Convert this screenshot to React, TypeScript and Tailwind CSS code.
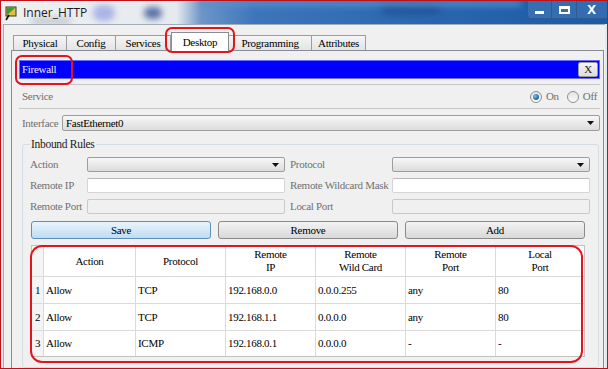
import React from 'react';

const tabs = [
  { name: 'Physical', w: 'w-[54px]' },
  { name: 'Config', w: 'w-[49px]' },
  { name: 'Services', w: 'w-[55px]' },
  { name: 'Desktop', w: 'w-[58px]', active: true },
  { name: 'Programming', w: 'w-[83px]' },
  { name: 'Attributes', w: 'w-[54px]' },
];

const rules = [
  ['1', 'Allow', 'TCP', '192.168.0.0', '0.0.0.255', 'any', '80'],
  ['2', 'Allow', 'TCP', '192.168.1.1', '0.0.0.0', 'any', '80'],
  ['3', 'Allow', 'ICMP', '192.168.0.1', '0.0.0.0', '-', '-'],
];

const headers = [
  ['Action'],
  ['Protocol'],
  ['Remote', 'IP'],
  ['Remote', 'Wild Card'],
  ['Remote', 'Port'],
  ['Local', 'Port'],
];

const colW = ['w-[92px]', 'w-[90px]', 'w-[90px]', 'w-[90px]', 'w-[90px]', 'w-[89px]'];

const Arrow = () => (
  <svg width="7" height="4" viewBox="0 0 7 4" className="shrink-0">
    <path d="M0 0h7L3.5 4z" fill="#111" />
  </svg>
);

const Combo: React.FC<{ text?: string; className?: string }> = ({ text, className }) => (
  <div
    className={`flex items-center justify-between rounded-[2px] border border-[#9d9d9d] bg-linear-to-b from-[#f7f7f7] to-[#dcdcdc] pl-[3px] pr-[5px] ${className ?? ''}`}
  >
    <span className="leading-none text-black">{text}</span>
    <Arrow />
  </div>
);

const TextBox: React.FC<{ disabled?: boolean }> = ({ disabled }) => (
  <div
    className={`h-[15px] w-[198px] rounded-[2px] border ${
      disabled ? 'border-[#c9c9c9] bg-[#f0f0f0]' : 'border-[#d5d5d5] border-t-[#b8b8b8] bg-white'
    }`}
  />
);

const Radio: React.FC<{ checked?: boolean }> = ({ checked }) => (
  <span className="flex h-[12px] w-[12px] items-center justify-center rounded-full border border-[#8f8f8f] bg-linear-to-b from-[#e4e4e4] to-[#fafafa]">
    {checked && (
      <span className="h-[6px] w-[6px] rounded-full bg-[radial-gradient(circle_at_35%_35%,#7fc0f0,#1f5fa8_70%)]" />
    )}
  </span>
);

const TitleIcon = () => (
  <svg width="13" height="15" viewBox="0 0 13 15">
    <rect x="1" y="1" width="10" height="9" fill="#d8c24a" stroke="#3b3b20" strokeWidth="1" />
    <path d="M2 2l8 0-8 7z" fill="#3f9a36" />
    <path d="M4 9l-3 5" stroke="#111" strokeWidth="1.6" />
  </svg>
);

export default function App() {
  return (
    <div className="relative flex h-[369px] w-[608px] flex-col overflow-hidden border border-[#c0101a] bg-[#f0f0f0] font-[Liberation_Serif,Times_New_Roman,serif] text-[11px] leading-[13px] tracking-[-0.3px]">
      {/* title bar */}
      <div className="relative h-[23px] shrink-0 overflow-hidden bg-[linear-gradient(90deg,#eef0f2_0%,#e6eaee_29%,#6e96c8_33%,#3d75ba_42%,#2e69b1_65%,#2260aa_85%,#1d5aa5_100%)] tracking-normal">
        <div className="absolute left-[92px] top-[4px] h-[16px] w-[22px] rounded-full bg-[#aab4e6] blur-[3px]" />
        <div className="absolute left-[143px] top-[6px] h-[12px] w-[18px] rounded-full bg-[#5c72a8] blur-[3px]" />
        <div className="absolute left-[30px] top-[16px] h-[8px] w-[40px] rounded-full bg-[#c9ccd0] blur-[3px]" />
        <div className="absolute left-[380px] top-[2px] h-[10px] w-[60px] rounded-full bg-[#1c4f92] blur-[4px]" />
        <div className="absolute left-[200px] top-0 h-[5px] w-[320px] bg-[#5a8fcc] blur-[3px]" />
        <div className="absolute left-[4px] top-[5px]">
          <TitleIcon />
        </div>
        <span className="absolute left-[22px] top-[4px] font-[Open_Sans,Liberation_Sans,sans-serif] text-[12px] leading-[15px] text-[#1b1b1b]">
          Inner_HTTP
        </span>
        <div className="absolute right-[-6px] top-0 flex h-[18px]">
          <div className="flex w-[25px] items-end justify-center rounded-bl-[4px] border border-t-0 border-[#2d5b94] bg-[#ffffff]/10 pb-[4px]">
            <span className="h-[3px] w-[9px] bg-white" />
          </div>
          <div className="flex w-[25px] items-center justify-center border border-l-0 border-t-0 border-[#2d5b94] bg-[#ffffff]/10">
            <span className="h-[8px] w-[11px] border-[2px] border-t-[3px] border-white" />
          </div>
          <div className="flex w-[36px] items-center justify-center rounded-br-[4px] border border-l-0 border-t-0 border-[#2d5b94] bg-[#ffffff]/10 pr-[6px] font-sans text-[13px] font-bold text-white">
            X
          </div>
        </div>
      </div>

      {/* window body */}
      <div className="flex min-h-0 flex-1">
        <div className="w-[3px] shrink-0 border-r border-[#a4adb7] bg-[#e3e8ee]" />
        <div className="flex min-w-0 flex-1 flex-col border-t border-[#a4adb7] bg-[#f0f0f0] pl-[7px] pr-[1px] pt-[7px]">
          {/* tabs */}
          <div className="flex h-[18px] items-end pl-[2px]">
            {tabs.map((t) =>
              t.active ? (
                <div
                  key={t.name}
                  className={`${t.w} relative z-10 -mb-px flex h-[19px] items-center justify-center border border-b-0 border-[#898c95] bg-white text-black`}
                >
                  {t.name}
                </div>
              ) : (
                <div
                  key={t.name}
                  className={`${t.w} flex h-[15px] items-center justify-center border border-b-0 border-l-0 border-[#9a9ca3] bg-linear-to-b from-[#f5f5f5] to-[#e4e4e4] text-black first:border-l`}
                >
                  {t.name}
                </div>
              )
            )}
          </div>

          {/* tab panel */}
          <div className="flex flex-1 flex-col border border-b-0 border-[#898c95] bg-[#f0f0f0] pl-[7px] pr-[3px] pt-[9px]">
            {/* firewall header */}
            <div className="flex h-[19px] items-center justify-between border border-[#6b6bff] bg-[#0000ff] pl-[2px] pr-[1px]">
              <span className="text-[#ececff]">Firewall</span>
              <span className="flex h-[15px] w-[20px] items-center justify-center rounded-[2px] border border-[#9a9a9a] bg-linear-to-b from-[#f4f4f4] to-[#dedede] text-[#222]">
                X
              </span>
            </div>
            <div className="h-[6px] border-b border-[#c6c6c6]" />

            {/* service */}
            <div className="flex h-[24px] items-center justify-between border-b border-[#c6c6c6] pl-[3px] pr-[3px] text-[#707070]">
              <span>Service</span>
              <div className="flex items-center">
                <Radio checked />
                <span className="ml-[4px] mr-[8px]">On</span>
                <Radio />
                <span className="ml-[4px]">Off</span>
              </div>
            </div>

            {/* interface */}
            <div className="mt-[6px] flex items-center pl-[3px]">
              <span className="w-[40px] text-[#707070]">Interface</span>
              <Combo text="FastEthernet0" className="h-[16px] flex-1" />
            </div>

            {/* inbound rules */}
            <fieldset className="ml-[3px] mr-[1px] mt-[6px] flex-1 rounded-[3px] border border-[#d3dce3] pl-[7px] pt-[6px]">
              <legend className="px-[1px] text-[11.5px] leading-[14px] text-[#1a1a1a]">Inbound Rules</legend>

              <div className="grid grid-cols-[57px_198px_107px_198px] gap-y-[6px] whitespace-nowrap text-[#707070]">
                <span className="self-center">Action</span>
                <Combo className="h-[15px]" />
                <span className="self-center pl-[5px]">Protocol</span>
                <Combo className="h-[15px]" />

                <span className="self-center">Remote IP</span>
                <TextBox />
                <span className="self-center pl-[5px]">Remote Wildcard Mask</span>
                <TextBox />

                <span className="self-center">Remote Port</span>
                <TextBox disabled />
                <span className="self-center pl-[5px]">Local Port</span>
                <TextBox disabled />
              </div>

              {/* buttons */}
              <div className="mt-[7px] flex gap-[7px] pl-[1px] text-black">
                <button className="flex h-[18px] w-[180px] items-center justify-center rounded-[3px] border border-[#5b8fbd] bg-linear-to-b from-[#e9f4fc] to-[#bedcf2]">
                  Save
                </button>
                <button className="flex h-[18px] w-[180px] items-center justify-center rounded-[3px] border border-[#8a8a8a] bg-linear-to-b from-[#f3f3f3] to-[#d9d9d9]">
                  Remove
                </button>
                <button className="flex h-[18px] w-[180px] items-center justify-center rounded-[3px] border border-[#8a8a8a] bg-linear-to-b from-[#f3f3f3] to-[#d9d9d9]">
                  Add
                </button>
              </div>

              {/* rules table */}
              <div className="ml-[1px] mt-[6px] w-[554px] border border-[#c2c2c2] bg-white text-black">
                <div className="flex h-[30px]">
                  <div className="w-[11px] bg-[#f4f4f4]" />
                  {headers.map((h, i) => (
                    <div
                      key={i}
                      className={`${colW[i]} flex flex-col items-center justify-center border-l border-[#dadada] leading-[13px]`}
                    >
                      {h.map((line) => (
                        <span key={line}>{line}</span>
                      ))}
                    </div>
                  ))}
                </div>
                {rules.map((r, ri) => (
                  <div key={r[0]} className={`flex border-t border-[#dadada] ${ri === 2 ? 'h-[26px]' : 'h-[27px]'}`}>
                    <div className="flex w-[11px] items-center justify-center bg-[#f4f4f4]">{r[0]}</div>
                    {r.slice(1).map((cell, ci) => (
                      <div key={ci} className={`${colW[ci]} flex items-center border-l border-[#dadada] pl-[2px]`}>
                        {cell}
                      </div>
                    ))}
                  </div>
                ))}
              </div>
            </fieldset>
          </div>
        </div>
        <div className="w-[2px] shrink-0 bg-[#e3e8ee]" />
      </div>

      {/* red annotation outlines */}
      <div className="pointer-events-none absolute left-[164px] top-[26px] h-[26px] w-[70px] rounded-[7px] border-2 border-[#e3141c]" />
      <div className="pointer-events-none absolute left-[14px] top-[54px] h-[30px] w-[58px] rounded-[7px] border-2 border-[#e3141c]" />
      <div className="pointer-events-none absolute left-[29px] top-[244px] h-[118px] w-[553px] rounded-[12px] border-2 border-[#e3141c]" />
    </div>
  );
}
